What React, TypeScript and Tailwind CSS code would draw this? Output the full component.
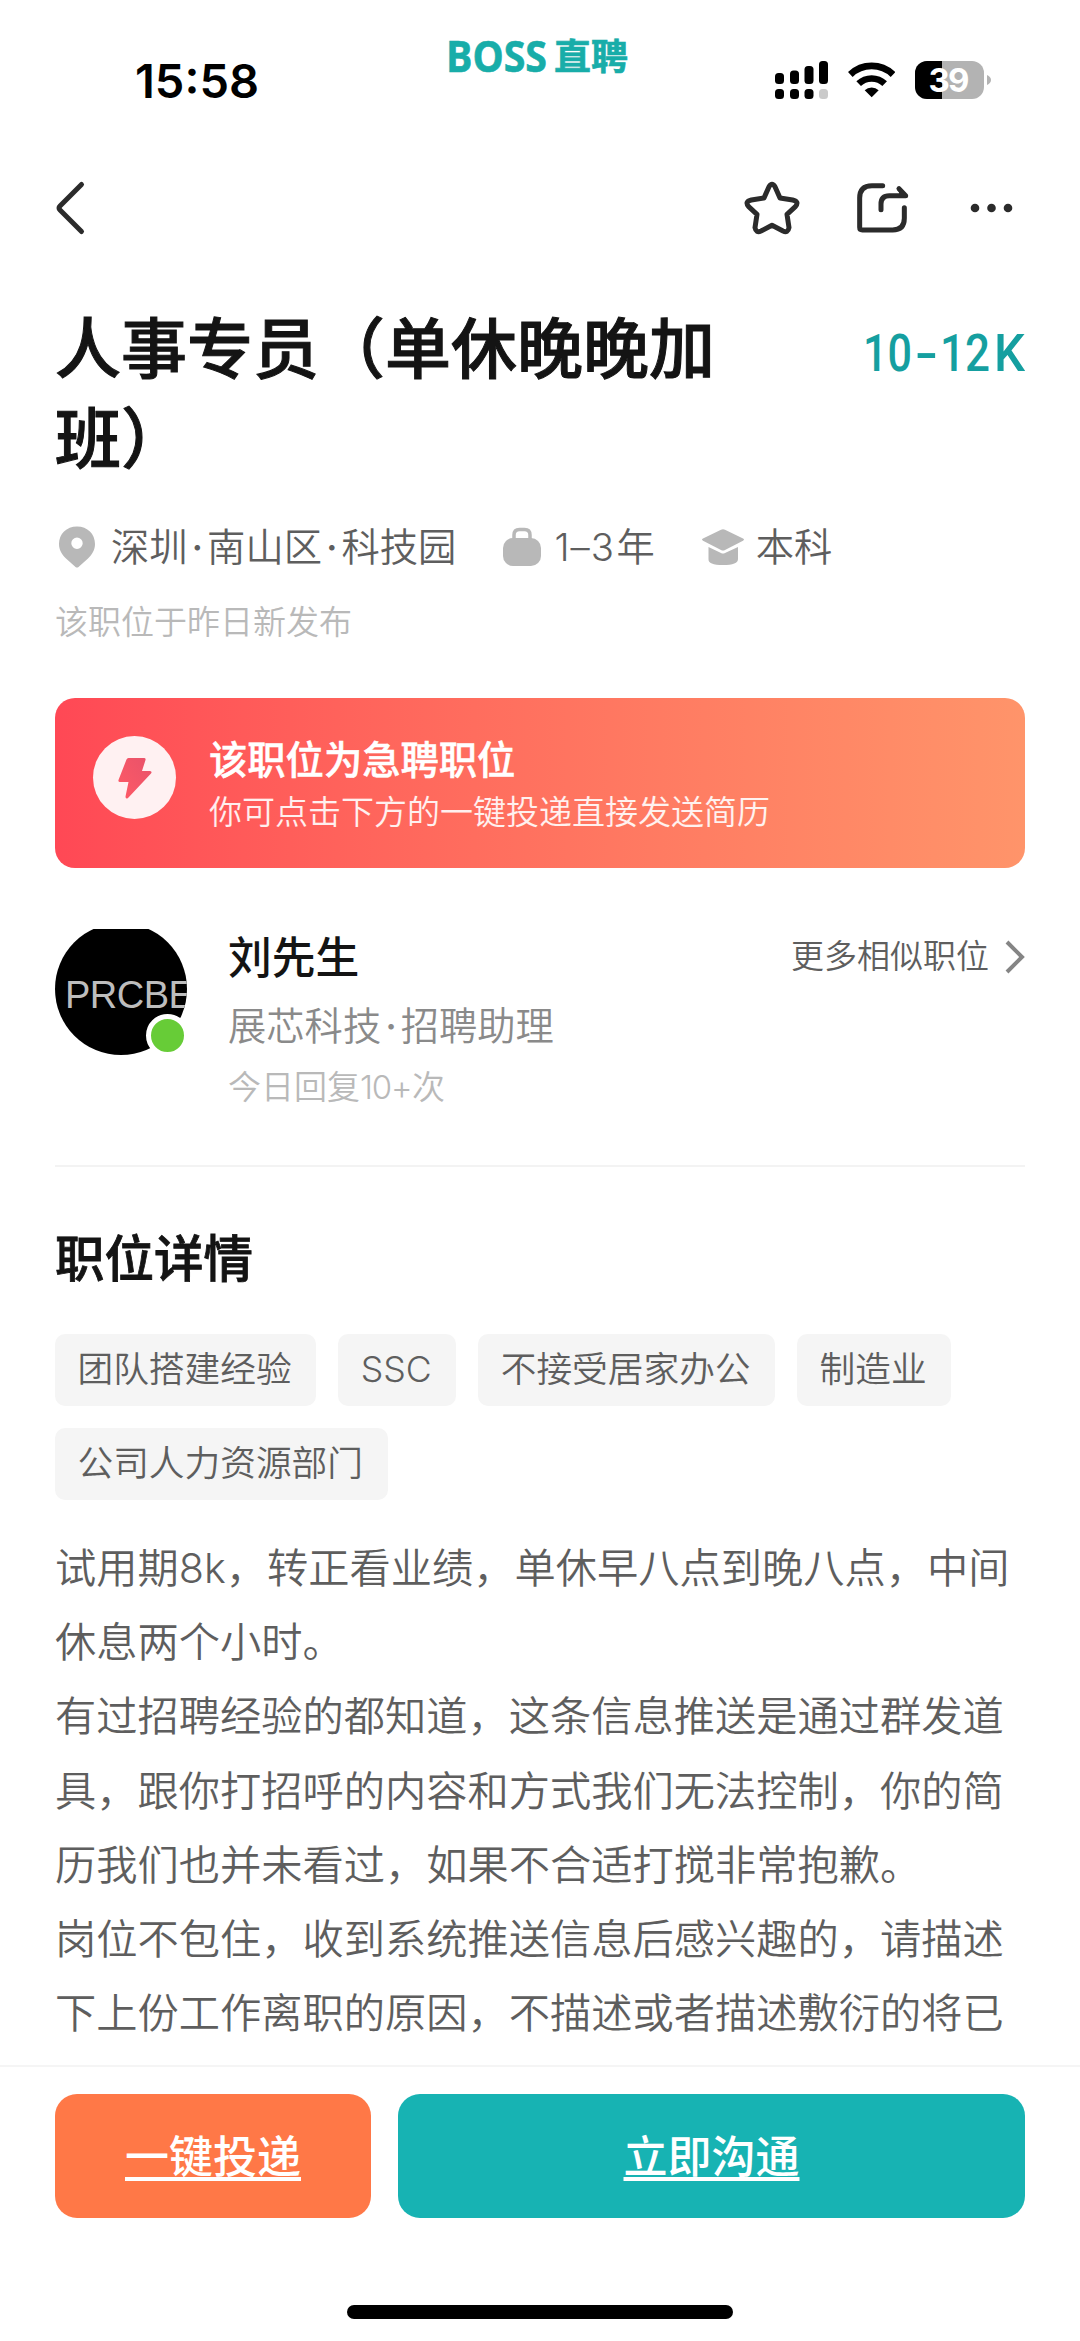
import type { ReactNode } from "react";

const tags = ["团队搭建经验", "SSC", "不接受居家办公", "制造业", "公司人力资源部门"];

const paragraphs = [
  "试用期8k，转正看业绩，单休早八点到晚八点，中间休息两个小时。",
  "有过招聘经验的都知道，这条信息推送是通过群发道具，跟你打招呼的内容和方式我们无法控制，你的简历我们也并未看过，如果不合适打搅非常抱歉。",
  "岗位不包住，收到系统推送信息后感兴趣的，请描述下上份工作离职的原因，不描述或者描述敷衍的将已",
];

function Dot() {
  return <span className="inline-block w-[19.500px] text-center font-medium">·</span>;
}

function StatusBar() {
  return (
    <div className="relative flex h-[120px] shrink-0 items-center justify-between pt-[40px] pr-[89px] pl-[131px]">
      <svg width="136" height="64" viewBox="0 0 136 64" className="font-['Inter']">
        <text x="4" y="49.500" fontSize="47" fontWeight="600" textLength="124" lengthAdjust="spacingAndGlyphs">15:58</text>
      </svg>
      <svg
        className="absolute top-[19px] left-[439px] font-['Open_Sans','Noto_Sans_CJK_SC',sans-serif] font-bold"
        width="200"
        height="72"
        viewBox="0 0 200 72"
        fill="#18ada9"
        stroke="#18ada9"
        strokeWidth="0.600"
      >
        <text x="7" y="53" fontSize="43" textLength="101" lengthAdjust="spacingAndGlyphs">BOSS</text>
        <text x="115" y="50.500" fontSize="36" textLength="74" lengthAdjust="spacingAndGlyphs">直聘</text>
      </svg>
      <div className="flex items-center">
        <svg width="54" height="40" viewBox="0 0 54 40">
          <rect x="0" y="13" width="9" height="11" rx="3.500" />
          <rect x="15" y="10.500" width="9" height="13.500" rx="3.500" />
          <rect x="29.500" y="6" width="9" height="18" rx="3.500" />
          <rect x="44" y="1" width="9" height="23" rx="3.500" />
          <rect x="0" y="29" width="9" height="10" rx="3.500" />
          <rect x="15" y="29" width="9" height="10" rx="3.500" />
          <rect x="29.500" y="29" width="9" height="10" rx="3.500" />
          <rect x="44" y="29" width="9" height="10" rx="3.500" fill="#cacaca" />
        </svg>
        <svg className="ml-[19px]" width="47" height="36" viewBox="684 185 141 108" fill="none" stroke="#000">
          <path d="M691 222.500A92.500 92.500 0 0 1 819 222.500" strokeWidth="20" />
          <path d="M716 250A56.500 56.500 0 0 1 794 250" strokeWidth="20" />
          <path d="M755 291L734 270A31 31 0 0 1 776 270Z" fill="#000" stroke="none" />
        </svg>
        <svg className="ml-[20px]" width="76" height="38" viewBox="0 0 76 38">
          <rect width="69" height="38" rx="12" fill="#b3b3b3" />
          <path d="M27 0H12A12 12 0 0 0 0 12V26A12 12 0 0 0 12 38H27Z" />
          <path d="M72 14Q76 16 76 19T72 24Z" fill="#b3b3b3" />
          <text x="13.500" y="31" fill="#fff" fontSize="33" fontWeight="700" className="font-['Inter']" textLength="41">39</text>
        </svg>
      </div>
    </div>
  );
}

function NavBar() {
  return (
    <div className="flex h-[176px] shrink-0 items-center justify-between pr-[63px] pl-[53px] text-[#2b2b2b]">
      <svg width="34" height="58" viewBox="0 0 34 58" fill="none" stroke="currentColor" strokeWidth="5" strokeLinecap="round" strokeLinejoin="round">
        <path d="M28.500 5.500L7 27Q5 29 7 31L28.500 52.500" />
      </svg>
      <div className="flex items-center">
        <svg width="59" height="58" viewBox="370 537 177 174" fill="none" stroke="currentColor" strokeWidth="15" strokeLinejoin="round">
          <path d="M448 560Q457 545 466 560L481 594L519 600Q540 605 527 620L502 643L508 683Q505 700 490 693L457 676L424 693Q409 700 406 683L412 643L387 620Q374 605 395 600L433 594Z" />
        </svg>
        <svg className="ml-[53px]" width="56" height="58" viewBox="705 537 168 174" fill="none" stroke="currentColor" strokeWidth="15" strokeLinecap="round" strokeLinejoin="round">
          <path d="M788 557H756Q719 557 719 594V682Q719 690 727 690H818Q853 690 853 655V623" />
          <path d="M783 629V612Q783 587 808 587H857L837 566" />
          <path d="M838 568L857 587H842Z" fill="currentColor" strokeWidth="6" />
        </svg>
        <svg className="ml-[56px]" width="50" height="12" viewBox="0 0 50 12" fill="currentColor">
          <circle cx="8" cy="6" r="4.300" />
          <circle cx="24.500" cy="6" r="4.300" />
          <circle cx="41" cy="6" r="4.300" />
        </svg>
      </div>
    </div>
  );
}

function Meta({ icon, children }: { icon: ReactNode; children: ReactNode }) {
  return (
    <div className="flex items-center whitespace-nowrap">
      {icon}
      <span>{children}</span>
    </div>
  );
}

function JobHeader() {
  return (
    <section>
      <div className="flex justify-between">
        <h1 className="w-[680px] text-[66px] leading-[90px] font-medium text-[#141414] [-webkit-text-stroke:1px_#141414]">
          人事专员（单休晚晚加班）
        </h1>
        <svg width="170" height="60" viewBox="0 0 170 60" className="mt-[18px] font-['Roboto'] font-medium" fill="#159fa0">
          <text y="49" fontSize="51">
            <tspan x="8" textLength="49" lengthAdjust="spacingAndGlyphs">10</tspan>
            <tspan x="60" textLength="23" lengthAdjust="spacingAndGlyphs">-</tspan>
            <tspan x="85" textLength="50" lengthAdjust="spacingAndGlyphs">12</tspan>
            <tspan x="139" textLength="31" lengthAdjust="spacingAndGlyphs">K</tspan>
          </text>
        </svg>
      </div>
      <div className="mt-[38px] flex h-[50px] text-[38.300px] leading-[52px] font-[350] text-[#5e5e5e]">
        <Meta
          icon={
            <svg className="mr-[14px] ml-[3px]" width="39" height="44" viewBox="0 0 39 44" fill="#b8b8b8" fillRule="evenodd">
              <path d="M19 1.500C8.500 1.500 1 9 1 19C1 25 4 29.500 8 33.500L17.500 42Q19 43.200 20.500 42L30 33.500C34 29.500 37 25 37 19C37 9 29.500 1.500 19 1.500ZM19 12.500A5.700 5.700 0 1 1 19 23.900A5.700 5.700 0 1 1 19 12.500Z" />
            </svg>
          }
        >
          深圳<Dot />南山区<Dot />科技园
        </Meta>
        <div className="w-[47px]" />
        <Meta
          icon={
            <svg className="mr-[12px]" width="39" height="42" viewBox="0 0 39 42" fill="#b8b8b8">
              <path d="M11 14V9Q11 3.500 16.500 3.500H21.500Q27 3.500 27 9V14" fill="none" stroke="#b8b8b8" strokeWidth="3.500" />
              <rect x="0" y="12" width="38" height="28" rx="10" />
            </svg>
          }
        >
          <span className="inline-block w-[62px] tracking-[1px]">1–3</span>年
        </Meta>
        <div className="w-[46px]" />
        <Meta
          icon={
            <svg className="mr-[11px]" width="44" height="42" viewBox="0 0 44 42" fill="#b8b8b8">
              <path d="M20 3.700Q22 2.800 24 3.700L42 12.500Q44 13.500 42 14.700L24 24Q22 25 20 24L2 14.700Q0 13.500 2 12.500Z" />
              <path d="M7.500 21L20 27Q22 28 24 27L37 21V33Q37 39 22 39T7.500 33Z" />
            </svg>
          }
        >
          本科
        </Meta>
      </div>
      <p className="mt-[30px] text-[33px] leading-[41px] font-[350] text-[#b9b9b9]">该职位于昨日新发布</p>
    </section>
  );
}

function UrgentBanner() {
  return (
    <section className="mt-[55px] flex h-[170px] items-center rounded-[20px] bg-linear-to-r from-[#ff4855] to-[#ff946a] pl-[38px] text-white">
      <div className="-mt-[11px] flex size-[83px] items-center justify-center rounded-full bg-[#fff1f2]">
        <svg width="36" height="44" viewBox="0 0 36 44">
          <defs>
            <linearGradient id="bolt" x1="1" y1="0" x2="0" y2="1">
              <stop offset="0" stopColor="#e8526a" />
              <stop offset="1" stopColor="#ff5a66" />
            </linearGradient>
          </defs>
          <path d="M11.500 2H27Q29 2 28.500 4L25 15H33Q35.500 15.500 34 17.500L11 42Q8.500 43.500 8.500 40.500L11.500 26H3Q1 26 1.500 24L9.500 3.500Q10 2 11.500 2Z" fill="url(#bolt)" />
        </svg>
      </div>
      <div className="mt-[4px] ml-[33px]">
        <p className="text-[38.300px] leading-[54px] font-medium [-webkit-text-stroke:0.500px_#fff]">该职位为急聘职位</p>
        <p className="text-[33px] leading-[50px] font-[350] text-white/90">你可点击下方的一键投递直接发送简历</p>
      </div>
    </section>
  );
}

function Recruiter() {
  return (
    <section className="mt-[55px] flex h-[244px] border-b-2 border-[#f3f3f3]">
      <div className="relative size-[132px] shrink-0">
        <div className="size-full overflow-hidden rounded-full bg-black [clip-path:inset(6px_0_0_0)]">
          <p className="pt-[49px] pl-[10px] font-['Liberation_Sans'] text-[38px] leading-[46px] tracking-[-0.500px] text-[#bdbdbd]">PRCBE</p>
        </div>
        <span className="absolute top-[91px] left-[91px] size-[43px] rounded-full border-5 border-white bg-[#67cc37]" />
      </div>
      <div className="ml-[41px] flex-1">
        <p className="mt-[5px] text-[43.800px] leading-[61px] font-medium text-[#141414]">刘先生</p>
        <p className="mt-[11px] text-[38.300px] leading-[53px] font-[350] text-[#8a8a8a]">展芯科技<Dot />招聘助理</p>
        <p className="mt-[12px] text-[33px] leading-[44px] font-[350] text-[#b9b9b9]">
          今日回复<span className="inline-block w-[52px] tracking-[-1.200px]">10+</span>次
        </p>
      </div>
      <div className="mt-[10px] flex h-[48px] items-center text-[33px] font-[350] text-[#5e5e5e]">
        更多相似职位
        <svg className="ml-[14px]" width="22" height="36" viewBox="0 0 22 36" fill="none" stroke="#858585" strokeWidth="4">
          <path d="M4 3L19 18L4 33" />
        </svg>
      </div>
    </section>
  );
}

function JobDetail() {
  return (
    <section>
      <h2 className="mt-[57px] text-[49.500px] leading-[70px] font-medium text-[#141414] [-webkit-text-stroke:0.800px_#141414]">职位详情</h2>
      <div className="mt-[40px] flex flex-wrap gap-[22px]">
        {tags.map((tag) => (
          <span key={tag} className="h-[72px] rounded-[10px] bg-[#f5f5f5] pr-[24.500px] pl-[22.500px] text-[35.700px] leading-[71px] font-[350] text-[#5e5e5e]">
            {tag}
          </span>
        ))}
      </div>
      <div className="mt-[31px] text-[41.250px] leading-[74.200px] font-[350] text-[#5e5e5e]">
        {paragraphs.map((text) => (
          <p key={text}>{text}</p>
        ))}
      </div>
    </section>
  );
}

function ActionBar() {
  return (
    <footer className="absolute inset-x-0 bottom-0 h-[276px] border-t-2 border-[#f5f5f5] bg-white">
      <div className="mt-[27px] flex gap-[27px] px-[55px] text-[44px] leading-[126px] font-medium text-white">
        <button className="h-[124px] w-[316px] rounded-[22px] bg-[#ff7847] underline decoration-4 underline-offset-[4px]">一键投递</button>
        <button className="h-[124px] flex-1 rounded-[22px] bg-[#17b3b3] underline decoration-4 underline-offset-[4px]">立即沟通</button>
      </div>
      <div className="mx-auto mt-[87px] h-[14px] w-[386px] rounded-full bg-black" />
    </footer>
  );
}

export default function App() {
  return (
    <div className="relative flex h-[2341px] w-[1080px] flex-col overflow-hidden bg-white font-['Inter','Noto_Sans_CJK_SC',sans-serif]" lang="zh-CN">
      <StatusBar />
      <NavBar />
      <main className="px-[55px] pt-[8px]">
        <JobHeader />
        <UrgentBanner />
        <Recruiter />
        <JobDetail />
      </main>
      <ActionBar />
    </div>
  );
}
